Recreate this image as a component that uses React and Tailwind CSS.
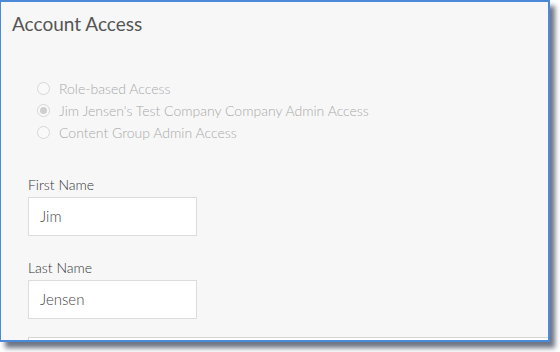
export default function App() {
  const options = [
    { label: "Role-based Access", checked: false },
    { label: "Jim Jensen's Test Company Company Admin Access", checked: true },
    { label: "Content Group Admin Access", checked: false },
  ];

  return (
    <div className="h-[352px] w-[560px] bg-white" style={{ fontFamily: "Lato, 'Open Sans', sans-serif" }}>
      <div className="h-[342px] w-[550px] overflow-hidden border-t-2 border-r-2 border-b-2 border-l border-[#4a8ad8] bg-[#f7f7f7] shadow-[5px_6px_5px_rgba(60,70,90,0.75)]">
        <h2 className="px-[11px] pt-[10px] text-[19px] leading-6 text-[#555]">Account Access</h2>

        <div className="mt-[44px] flex flex-col gap-[6px] pl-[36px]">
          {options.map((opt) => (
            <label key={opt.label} className="flex h-4 items-center gap-[9px] text-[14px] font-light text-[#a9a9a9]">
              <span className="flex h-[13px] w-[13px] items-center justify-center rounded-full border border-[#d6d6d6] bg-[#f9f9f9]">
                {opt.checked && <span className="h-[7px] w-[7px] rounded-full bg-[#cfcfcf]" />}
              </span>
              {opt.label}
            </label>
          ))}
        </div>

        <div className="mt-[35px] pl-[27px]">
          <div className="text-[14px] font-light leading-5 text-[#333]">First Name</div>
          <div className="mt-[2px] flex h-[39px] w-[169px] items-center border border-[#dcdcdc] bg-white pl-[11px] text-[15px] font-light text-[#444]">
            Jim
          </div>
          <div className="mt-[22px] text-[14px] font-light leading-5 text-[#333]">Last Name</div>
          <div className="mt-[2px] flex h-[39px] w-[169px] items-center border border-[#dcdcdc] bg-white pl-[11px] text-[15px] font-light text-[#444]">
            Jensen
          </div>
          <div className="mt-[18px] h-[20px] w-[600px] border border-[#d4d4d4] bg-white" />
        </div>
      </div>
    </div>
  );
}
